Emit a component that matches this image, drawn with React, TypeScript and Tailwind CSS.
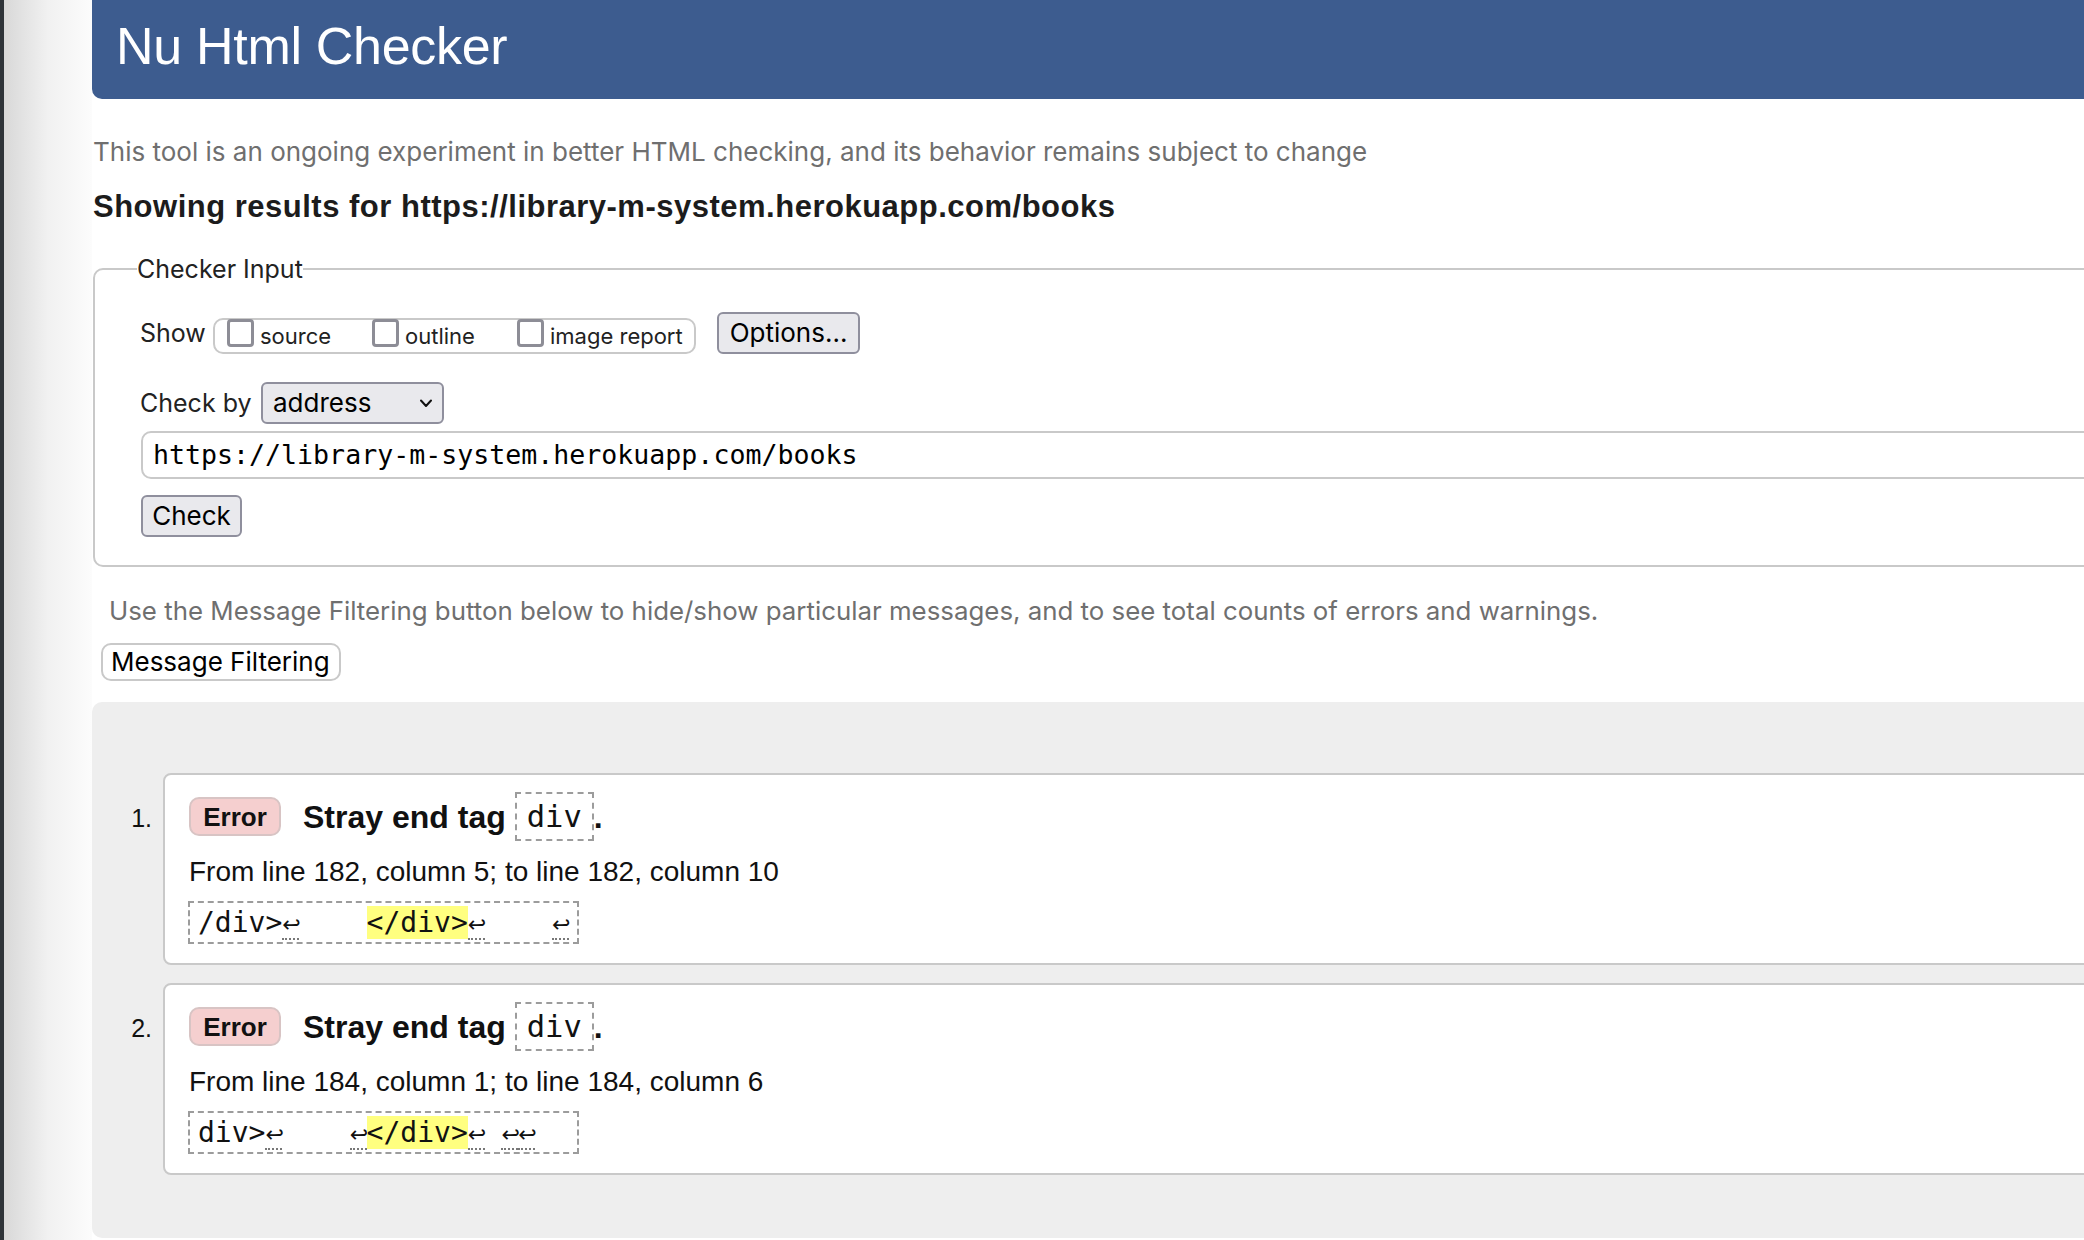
import React from "react";

const SANS = "font-['Liberation_Sans',Arial,sans-serif]";
const UI = "font-['Inter','Noto_Sans',sans-serif]";
const MONO = "font-['DejaVu_Sans_Mono','Liberation_Mono',monospace]";

function Ret() {
  return (
    <span className="inline-block w-[16.86px] text-center font-['DejaVu_Sans',sans-serif] text-[22px] leading-none pb-[2px] border-b-2 border-dotted border-[#777]">
      ↩
    </span>
  );
}

function Checkbox() {
  return <span className="mt-[-1px] w-[27px] h-[28px] shrink-0 rounded-[4px] border-[3px] border-[#8d8d96] bg-white" />;
}

function Message({
  n,
  from,
  extract,
}: {
  n: string;
  from: string;
  extract: React.ReactNode;
}) {
  return (
    <li className="flex">
      <div className={`w-[71px] shrink-0 pr-[11px] pt-[33px] text-right text-[25px] leading-none text-[#111] ${SANS}`}>{n}</div>
      <div className="flex-1 flex flex-col items-start bg-white border-2 border-[#c9c9c9] rounded-[8px] pl-[24px] pt-[17px] pb-[19px]">
        <div className="flex items-center h-[49px]">
          <span className={`h-[39px] w-[92px] flex items-center justify-center rounded-[10px] bg-[#f5cfcf] border-2 border-[#d8c4c4] font-bold text-[26px] leading-none text-[#111] ${SANS}`}>
            Error
          </span>
          <span className={`ml-[22px] flex items-center font-bold text-[32px] leading-none text-[#111] ${SANS}`}>
            <span>Stray end tag</span>
            <span className={`ml-[9px] h-[49px] border-2 border-dashed border-[#9c9c9c] px-[10px] font-normal text-[30.5px] leading-[45px] ${MONO}`}>
              div
            </span>
            <span>.</span>
          </span>
        </div>
        <p className={`mt-[17px] text-[28px] leading-none text-[#111] ${SANS}`}>{from}</p>
        <div className={`mt-[15px] ml-[-1px] h-[43px] border-2 border-dashed border-[#9c9c9c] px-[8px] text-[28px] leading-[39px] whitespace-pre text-[#111] ${MONO}`}>
          {extract}
        </div>
      </div>
    </li>
  );
}

export default function App() {
  return (
    <div className="w-[2084px] h-[1240px] overflow-hidden flex bg-white text-[#222]">
      <div className="w-[92px] shrink-0 flex h-full">
        <div className="w-[4px] bg-[#2f3439]" />
        <div className="flex-1 bg-linear-to-r from-[#d8d8d8] via-[#f1f1f1] to-[#fcfcfc]" />
      </div>
      <div className="w-[2040px] shrink-0 flex flex-col">
        <header className="h-[99px] shrink-0 bg-[#3d5c8f] rounded-bl-[10px] pl-[24px] pt-[20px]">
          <h1 className={`text-[52px] leading-none tracking-[-0.3px] text-white ${SANS}`}>Nu Html Checker</h1>
        </header>

        <p className={`mt-[40px] ml-[1px] text-[26px] leading-[26px] text-[#6f6f6f] ${UI}`}>
          This tool is an ongoing experiment in better HTML checking, and its behavior remains subject to change
        </p>

        <h2 className={`mt-[26px] ml-[1px] font-bold text-[31px] leading-none tracking-[0.5px] text-[#1c1c1c] ${SANS}`}>
          Showing results for https://library-m-system.herokuapp.com/books
        </h2>

        <fieldset className={`mt-[32px] ml-[1px] border-2 border-[#c9c9c9] rounded-[10px] pb-[28px] ${UI}`}>
          <legend className="ml-[42px] text-[25px] leading-[30px] text-[#222]">Checker Input</legend>
          <div className="pl-[45px] flex flex-col">
            <div className="mt-[28px] flex items-center h-[42px]">
              <span className="w-[73px] text-[25px] leading-[30px]">Show</span>
              <div className="self-end h-[36px] w-[483px] border-2 border-[#c9c9c9] rounded-[10px] flex items-start pl-[12px]">
                <Checkbox />
                <span className="ml-[6px] w-[112px] mt-[3px] text-[22px] leading-[26px]">source</span>
                <Checkbox />
                <span className="ml-[6px] w-[112px] mt-[3px] text-[22px] leading-[26px]">outline</span>
                <Checkbox />
                <span className="ml-[6px] mt-[3px] text-[22px] leading-[26px] whitespace-nowrap">image report</span>
              </div>
              <button className="ml-[21px] h-[42px] w-[143px] bg-[#e9e9ed] border-2 border-[#8f8f9d] rounded-[6px] text-[26px] leading-none text-black">
                Options...
              </button>
            </div>

            <div className="mt-[28px] flex items-center h-[42px]">
              <span className="w-[121px] text-[25px] leading-[30px]">Check by</span>
              <div className="h-[42px] w-[183px] bg-[#e9e9ed] border-2 border-[#8f8f9d] rounded-[6px] flex items-center justify-between pl-[10px] pr-[10px]">
                <span className="text-[26px] leading-none text-black">address</span>
                <svg width="12" height="9" viewBox="0 0 12 9" fill="none">
                  <path d="M1 1.5 L6 7 L11 1.5" stroke="#111" strokeWidth="2" strokeLinecap="round" strokeLinejoin="round" />
                </svg>
              </div>
            </div>

            <div className={`mt-[7px] ml-[1px] h-[48px] border-2 border-[#c9c9c9] rounded-[10px] pl-[10px] flex items-center text-[26.6px] text-black ${MONO}`}>
              https://library-m-system.herokuapp.com/books
            </div>

            <div>
              <button className="mt-[16px] ml-[1px] h-[42px] w-[101px] bg-[#e9e9ed] border-2 border-[#8f8f9d] rounded-[6px] text-[26px] leading-none text-black">
                Check
              </button>
            </div>
          </div>
        </fieldset>

        <p className={`mt-[29px] ml-[17px] text-[25.85px] leading-[30px] text-[#6f6f6f] ${UI}`}>
          Use the Message Filtering button below to hide/show particular messages, and to see total counts of errors and warnings.
        </p>
        <div>
          <button className={`mt-[17px] ml-[9px] h-[38px] w-[240px] bg-white border-2 border-[#c9c9c9] rounded-[10px] pl-[8px] text-left text-[26px] leading-[30px] text-black ${UI}`}>
            Message Filtering
          </button>
        </div>

        <div className="mt-[21px] mb-[2px] flex-1 bg-[#eeeeee] rounded-tl-[10px] rounded-bl-[10px] pt-[71px]">
          <ol className="flex flex-col gap-[18px]">
            <Message
              n="1."
              from="From line 182, column 5; to line 182, column 10"
              extract={
                <>
                  /div&gt;<Ret />{"    "}
                  <span className="bg-[#ffff80]">&lt;/div&gt;</span>
                  <Ret />{"    "}
                  <Ret />
                </>
              }
            />
            <Message
              n="2."
              from="From line 184, column 1; to line 184, column 6"
              extract={
                <>
                  div&gt;<Ret />{"    "}
                  <Ret />
                  <span className="bg-[#ffff80]">&lt;/div&gt;</span>
                  <Ret /> <Ret />
                  <Ret />{"  "}
                </>
              }
            />
          </ol>
        </div>
      </div>
    </div>
  );
}
